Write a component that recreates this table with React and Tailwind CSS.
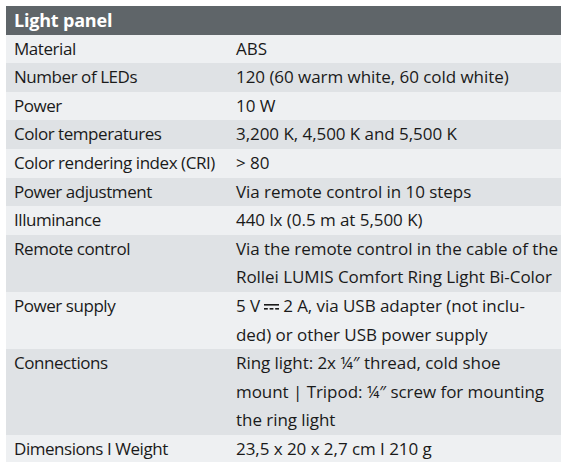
const rows = [
  { label: "Material", value: ["ABS"] },
  { label: "Number of LEDs", value: ["120 (60 warm white, 60 cold white)"] },
  { label: "Power", value: ["10 W"] },
  { label: "Color temperatures", value: ["3,200 K, 4,500 K and 5,500 K"] },
  { label: "Color rendering index (CRI)", value: ["> 80"] },
  { label: "Power adjustment", value: ["Via remote control in 10 steps"] },
  { label: "Illuminance", value: ["440 lx (0.5 m at 5,500 K)"] },
  {
    label: "Remote control",
    value: [
      "Via the remote control in the cable of the",
      "Rollei LUMIS Comfort Ring Light Bi-Color",
    ],
  },
  { label: "Power supply", value: ["dc", "ded) or other USB power supply"] },
  {
    label: "Connections",
    value: [
      "Ring light: 2x ¼″ thread, cold shoe",
      "mount | Tripod: ¼″ screw for mounting",
      "the ring light",
    ],
  },
  { label: "Dimensions I Weight", value: ["23,5 x 20 x 2,7 cm I 210 g"] },
];

const DcSymbol = () => (
  <svg width="15" height="8" viewBox="0 0 15 8" className="mx-[4px] inline-block align-middle">
    <rect x="0" y="1" width="15" height="1.6" fill="#1a1a1a" />
    <rect x="0" y="5" width="3.8" height="1.6" fill="#1a1a1a" />
    <rect x="5.6" y="5" width="3.8" height="1.6" fill="#1a1a1a" />
    <rect x="11.2" y="5" width="3.8" height="1.6" fill="#1a1a1a" />
  </svg>
);

const App = () => {
  return (
    <div className="h-[462px] w-[568px] overflow-hidden bg-white pl-[6px] pt-[6px] font-['Open_Sans',sans-serif] text-[17px] leading-[28.6px] text-[#1a1a1a]">
      <div className="w-[555px]">
        <div className="bg-[#5f6569] pl-2 text-[18px] font-bold tracking-[-0.2px] text-white">Light panel</div>
        {rows.map((row, i) => (
          <div
            key={row.label}
            className={`flex ${i % 2 === 0 ? "bg-[#eef0f2]" : "bg-[#dfe2e5]"}`}
          >
            <div className="w-[222px] shrink-0 pl-2 tracking-[-0.45px] whitespace-nowrap">{row.label}</div>
            <div className="flex-1 pl-2 tracking-[-0.05px] whitespace-nowrap">
              {row.value.map((line) =>
                line === "dc" ? (
                  <div key={line}>
                    5 V<DcSymbol />2 A, via USB adapter (not inclu-
                  </div>
                ) : (
                  <div key={line}>{line}</div>
                )
              )}
            </div>
          </div>
        ))}
      </div>
    </div>
  );
};

export default App;
